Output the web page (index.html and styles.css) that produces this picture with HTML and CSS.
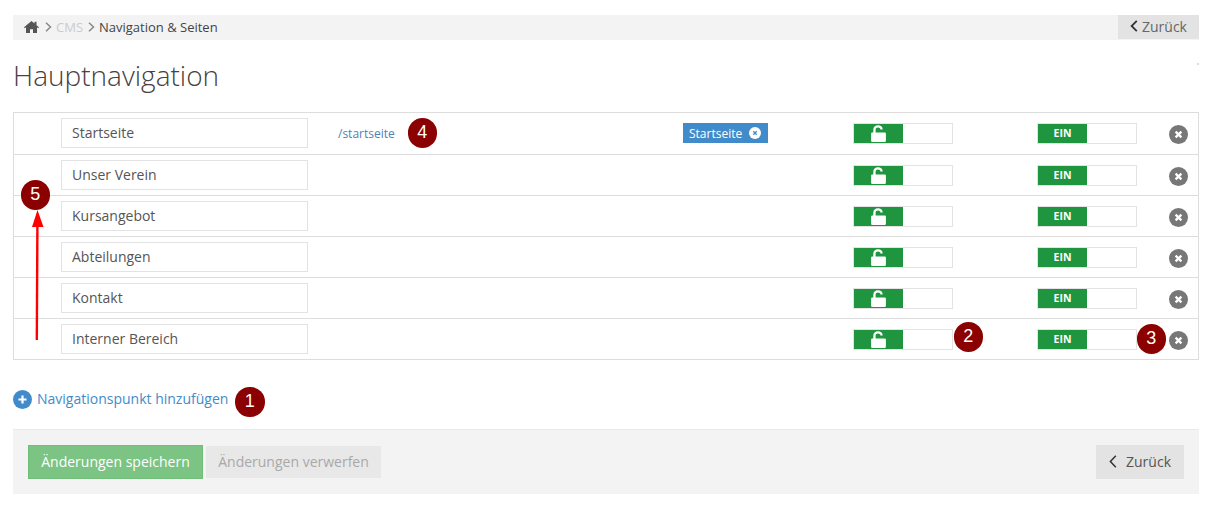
FILE: index.html
```html
<!DOCTYPE html>
<html lang="de">
<head>
<meta charset="utf-8">
<title>Hauptnavigation</title>
<link rel="stylesheet" href="styles.css">
</head>
<body>
<svg class="defs" width="0" height="0" aria-hidden="true">
  <symbol id="lock" viewBox="0 0 15 17">
    <path fill="#fff" d="M2.300 7.500V4.700C2.300 2 4.300 .3 7 .3c2.600 0 4.600 1.500 4.700 4.100H9.400C9.300 3.200 8.300 2.500 7 2.500S4.600 3.300 4.600 4.700v2.800h8.900c.9 0 1.400.5 1.400 1.300v6.600c0 1-.6 1.500-1.500 1.500H1.600c-.9 0-1.500-.5-1.500-1.500V8.800c0-.8.5-1.300 1.400-1.300z"/>
  </symbol>
  <symbol id="close" viewBox="0 0 19 19">
    <circle cx="9.500" cy="9.500" r="9.500" fill="#777"/>
    <path d="M6.600 6.600l5.800 5.800M12.400 6.600l-5.800 5.800" stroke="#fff" stroke-width="2.300"/>
  </symbol>
</svg>
<div class="page">
  <nav class="crumbs">
    <div class="crumb-path">
      <svg class="home" viewBox="0 0 15 12"><path fill="#555" d="M7.500 0L0 6.300l.8 1L2 6.300V12h4V8.200h3V12h4V6.300l1.200 1 .8-1-2.500-2.100V.8h-2v1.700z"/></svg>
      <svg class="chev" viewBox="0 0 7 10"><path d="M1 .8l4.500 4.200L1 9.200" fill="none" stroke="#888" stroke-width="1.500"/></svg>
      <span class="crumb-muted">CMS</span>
      <svg class="chev" viewBox="0 0 7 10"><path d="M1 .8l4.500 4.200L1 9.200" fill="none" stroke="#888" stroke-width="1.500"/></svg>
      <span>Navigation &amp; Seiten</span>
    </div>
    <a class="crumb-back">
      <svg class="back-chev" viewBox="0 0 8 12"><path d="M6.800 .8L1.600 6l5.200 5.200" fill="none" stroke="#333" stroke-width="1.800"/></svg>
      Zurück
    </a>
  </nav>

  <h1 class="title">Hauptnavigation</h1>

  <div class="list">
    <div class="row row-first">
      <input class="name" value="Startseite">
      <a class="url">/startseite</a>
      <span class="tag">Startseite <svg class="tag-x" viewBox="0 0 12 12"><circle cx="6" cy="6" r="6" fill="#fff"/><path d="M4.300 4.300l3.400 3.400M7.700 4.300L4.300 7.700" stroke="#428bca" stroke-width="1.300"/></svg></span>
      <div class="toggle toggle-lock"><span class="on"><svg class="lock"><use href="#lock"/></svg></span></div>
      <div class="toggle"><span class="on">EIN</span></div>
      <svg class="remove"><use href="#close"/></svg>
    </div>
    <div class="row">
      <input class="name" value="Unser Verein">
      <span class="url"></span><span></span>
      <div class="toggle toggle-lock"><span class="on"><svg class="lock"><use href="#lock"/></svg></span></div>
      <div class="toggle"><span class="on">EIN</span></div>
      <svg class="remove"><use href="#close"/></svg>
    </div>
    <div class="row">
      <input class="name" value="Kursangebot">
      <span class="url"></span><span></span>
      <div class="toggle toggle-lock"><span class="on"><svg class="lock"><use href="#lock"/></svg></span></div>
      <div class="toggle"><span class="on">EIN</span></div>
      <svg class="remove"><use href="#close"/></svg>
    </div>
    <div class="row">
      <input class="name" value="Abteilungen">
      <span class="url"></span><span></span>
      <div class="toggle toggle-lock"><span class="on"><svg class="lock"><use href="#lock"/></svg></span></div>
      <div class="toggle"><span class="on">EIN</span></div>
      <svg class="remove"><use href="#close"/></svg>
    </div>
    <div class="row">
      <input class="name" value="Kontakt">
      <span class="url"></span><span></span>
      <div class="toggle toggle-lock"><span class="on"><svg class="lock"><use href="#lock"/></svg></span></div>
      <div class="toggle"><span class="on">EIN</span></div>
      <svg class="remove"><use href="#close"/></svg>
    </div>
    <div class="row">
      <input class="name" value="Interner Bereich">
      <span class="url"></span><span></span>
      <div class="toggle toggle-lock"><span class="on"><svg class="lock"><use href="#lock"/></svg></span></div>
      <div class="toggle"><span class="on">EIN</span></div>
      <svg class="remove"><use href="#close"/></svg>
    </div>
  </div>

  <a class="add">
    <svg class="add-icon" viewBox="0 0 19 19"><circle cx="9.500" cy="9.500" r="9.500" fill="#428bca"/><path d="M9.500 5.500v8M5.500 9.500h8" stroke="#fff" stroke-width="2.200"/></svg>
    <span class="add-label">Navigationspunkt hinzufügen</span>
  </a>

  <div class="actions">
    <button class="btn btn-save">Änderungen speichern</button>
    <button class="btn btn-discard">Änderungen verwerfen</button>
    <button class="btn btn-back">
      <svg class="back-chev-lg" viewBox="0 0 8 13"><path d="M6.800 .8L1.400 6.500l5.400 5.700" fill="none" stroke="#333" stroke-width="1.500"/></svg>
      Zurück
    </button>
  </div>
</div>

<span class="badge badge-1">1</span>
<span class="badge badge-2">2</span>
<span class="badge badge-3">3</span>
<span class="badge badge-4">4</span>
<span class="badge badge-5">5</span>
<svg class="arrow" viewBox="0 0 12 130"><path d="M4.800 130L5.400 16" stroke="#f00" stroke-width="2.400" fill="none"/><path d="M5.500 0L11.500 17H0z" fill="#f00"/></svg>
<i class="dot"></i>
</body>
</html>
```
FILE: styles.css
```css
* { box-sizing: border-box; }
html, body { margin: 0; background: #fff; }
body {
  position: relative;
  height: 515px;
  overflow: hidden;
  font-family: "Open Sans", sans-serif;
  color: #555;
}
.defs { position: absolute; }
.page { padding: 15px 19px 0 13px; }

.crumbs {
  display: flex;
  justify-content: space-between;
  height: 25px;
  background: #f3f3f3;
}
.crumb-path {
  display: flex;
  align-items: center;
  padding: 0 0 2px 11px;
  font-size: 13px;
  color: #444;
  height: 25px;
}
.home { width: 15px; height: 12px; margin-right: 6px; }
.chev { width: 7px; height: 10px; margin-right: 4px; }
.crumb-muted { color: #ccc; margin-right: 5px; }
.crumb-back {
  display: flex;
  align-items: center;
  width: 81px;
  height: 24px;
  padding: 0 0 2px 12px;
  gap: 4px;
  background: #e3e3e3;
  font-size: 14px;
  color: #666;
}
.back-chev { width: 8px; height: 12px; }

.title {
  margin: 17px 0 19px 0;
  font-size: 28px;
  line-height: 36px;
  font-weight: 300;
  color: #4a4040;
}

.list {
  border: 1px solid #ddd;
  border-bottom: 0;
}
.row {
  display: grid;
  grid-template-columns: 247px 375px 170px 184px 132px 19px;
  align-items: center;
  height: 41px;
  padding-left: 47px;
  border-bottom: 1px solid #ddd;
}
.row-first { height: 42px; padding-bottom: 1px; }
.name {
  width: 247px;
  height: 30px;
  padding: 0 10px 2px;
  border: 1px solid #e3e3e3;
  background: #fff;
  font: 14px "Open Sans", sans-serif;
  color: #555;
  outline: 0;
}
.url {
  padding-left: 30px;
  font-size: 12px;
  color: #4f7fb8;
}
.tag {
  display: inline-flex;
  align-items: center;
  justify-self: start;
  gap: 7px;
  height: 20px;
  padding: 0 7px 0 6px;
  background: #428bca;
  color: #fff;
  font-size: 12px;
}
.tag-x { width: 12px; height: 12px; }
.toggle {
  width: 100px;
  height: 21px;
  border: 1px solid #e3e3e3;
  background: #fff;
}
.on {
  display: flex;
  align-items: center;
  justify-content: center;
  width: 49px;
  height: 19px;
  padding-bottom: 1px;
  background: #1e953e;
  color: #fff;
  font-size: 10.500px;
  font-weight: 700;
}
.toggle-lock .on { padding: 0; }
.lock { width: 15px; height: 17px; display: block; }
.remove { width: 19px; height: 19px; display: block; margin-top: 2px; }

.add {
  display: flex;
  align-items: center;
  gap: 5px;
  margin-top: 29px;
  height: 20px;
  font-size: 14px;
  color: #428bca;
}
.add-label { padding-bottom: 2px; }
.add-icon { width: 19px; height: 19px; }

.actions {
  display: flex;
  align-items: center;
  gap: 3px;
  height: 65px;
  margin-top: 20px;
  padding: 0 15px;
  background: #f3f3f3;
  border-top: 1px solid #e8ebee;
}
.btn {
  font: 14px "Open Sans", sans-serif;
  height: 34px;
  border: 1px solid transparent;
  padding: 0 0 2px;
}
.btn-save {
  width: 175px;
  background: #7bc483;
  border-color: #6fbd78;
  color: #fff;
}
.btn-discard {
  width: 175px;
  height: 32px;
  background: #e8e8e8;
  color: #a8a8a8;
}
.btn-back {
  display: flex;
  align-items: center;
  justify-content: center;
  gap: 9px;
  width: 88px;
  margin-left: auto;
  background: #e3e3e3;
  color: #555;
}
.back-chev-lg { width: 8px; height: 13px; }

.badge {
  position: absolute;
  width: 29.500px;
  height: 29.500px;
  border-radius: 50%;
  background: #8b0000;
  color: #fff;
  font: 18px/29px "Liberation Sans", sans-serif;
  text-align: center;
}
.badge-1 { left: 235px; top: 387px; }
.badge-2 { left: 953.500px; top: 322px; }
.badge-3 { left: 1136.500px; top: 324px; }
.badge-4 { left: 407.500px; top: 118px; }
.badge-5 { left: 20.500px; top: 180px; }
.arrow {
  position: absolute;
  left: 32px;
  top: 210px;
  width: 12px;
  height: 130px;
}
.dot {
  position: absolute;
  left: 1197px;
  top: 63px;
  width: 2px;
  height: 2px;
  background: #ddd;
}
```
